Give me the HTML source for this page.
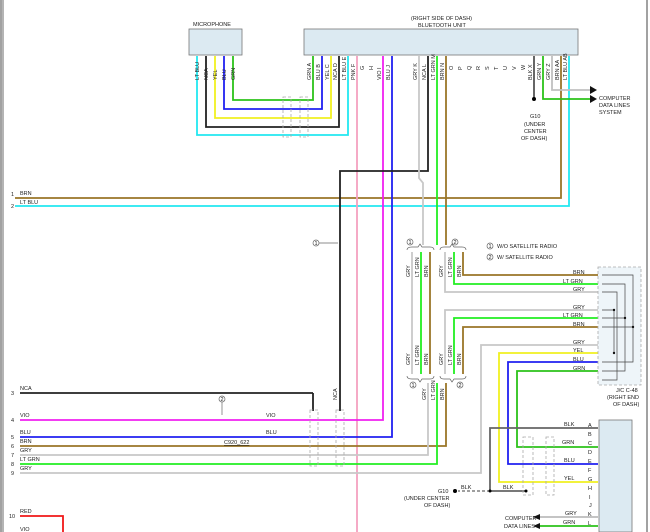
<!DOCTYPE html>
<html><head><meta charset="utf-8"><style>
html,body{margin:0;padding:0;background:#fff;}
svg{display:block;font-family:"Liberation Sans",sans-serif;}
text{font-size:5.5px;fill:#222;}
</style></head><body>
<svg width="650" height="532" viewBox="0 0 650 532" xmlns="http://www.w3.org/2000/svg">
<rect x="0" y="0" width="650" height="532" fill="#fff"/>
<line x1="1" y1="0" x2="1" y2="532" stroke="#444" stroke-width="1"/>
<line x1="3" y1="0" x2="3" y2="532" stroke="#444" stroke-width="0.8"/>
<line x1="647" y1="0" x2="647" y2="532" stroke="#444" stroke-width="1"/>

<!-- boxes -->
<text x="193" y="26">MICROPHONE</text>
<rect x="189" y="29" width="53" height="26" fill="#dceaf2" stroke="#777" stroke-width="0.8"/>
<text x="411" y="20">(RIGHT SIDE OF DASH)</text>
<text x="418" y="27">BLUETOOTH UNIT</text>
<rect x="304" y="29" width="274" height="26" fill="#dceaf2" stroke="#777" stroke-width="0.8"/>

<g fill="none" stroke-width="1.8">
<!-- mic wires -->
<path d="M233 56V100H313V56" stroke="#2cc21a"/>
<path d="M224 56V109H322V56" stroke="#2020f0"/>
<path d="M215 56V118H331V56" stroke="#f0f020"/>
<path d="M206 56V127H339V56" stroke="#222"/>
<path d="M197 56V135H348V56" stroke="#22e8f0"/>
<!-- right side -->
<path d="M15 198H561V56" stroke="#9a7628"/>
<path d="M15 206H569V56" stroke="#22e8f0"/>
<path d="M357 56V532" stroke="#f4a0c0"/>
<path d="M383 56V420H20" stroke="#f020f0"/>
<path d="M392 56V437H20" stroke="#2020f0"/>
<path d="M428 56V171H340V411" stroke="#222"/>
<path d="M313 393H20M313 393V411" stroke="#222"/>
<path d="M419 56V178L423 183V245" stroke="#c8c8c8"/>
<path d="M437 56V245" stroke="#22ee22"/>
<path d="M446 56V245" stroke="#9a7628"/>
<path d="M534 56V98" stroke="#555"/>
<path d="M543 56V99H590" stroke="#2cc21a"/>
<path d="M552 56V90H590" stroke="#c0c0c0"/>
<!-- group1 -->
<path d="M412 252V374" stroke="#c8c8c8"/>
<path d="M421 252V374" stroke="#22ee22"/>
<path d="M430 252V374" stroke="#9a7628"/>
<!-- group2 -->
<path d="M463 252V275H598" stroke="#9a7628"/>
<path d="M454 252V284H598" stroke="#22ee22"/>
<path d="M445 252V292H598" stroke="#c8c8c8"/>
<path d="M445 374V310H598" stroke="#c8c8c8"/>
<path d="M454 374V318H598" stroke="#22ee22"/>
<path d="M463 374V327H598" stroke="#9a7628"/>
<!-- lower -->
<path d="M446 383V446H20" stroke="#9a7628"/>
<path d="M428 383V455H20" stroke="#c8c8c8"/>
<path d="M437 383V464H20" stroke="#22ee22"/>
<path d="M598 345H481V473H20" stroke="#c8c8c8"/>
<path d="M598 353H499V482H598" stroke="#f0f020"/>
<path d="M598 362H508V464H598" stroke="#2020f0"/>
<path d="M598 371H517V447H598" stroke="#2cc21a"/>
<path d="M598 428H490V491H526" stroke="#666"/>
<path d="M598 517H540" stroke="#bbb"/>
<path d="M598 526H540" stroke="#2cc21a"/>
<path d="M20 516H63V532" stroke="#f01818"/>
</g>
<path d="M490 491H458" stroke="#666" stroke-width="1.3" stroke-dasharray="3,2"/>
<circle cx="490" cy="491" r="1.5"/><circle cx="526" cy="491" r="1.5"/><circle cx="455" cy="491" r="2"/>
<circle cx="534" cy="99" r="2"/>
<polygon points="590,86 597,90 590,94" fill="#111"/>
<polygon points="590,95 597,99 590,103" fill="#111"/>
<polygon points="540,514 533,517 540,520" fill="#111"/>
<polygon points="540,523 533,526 540,529" fill="#111"/>

<!-- dashed shields -->
<g fill="none" stroke="#aaa" stroke-width="0.8" stroke-dasharray="3,2">
<rect x="283" y="97" width="8" height="40"/><rect x="300" y="97" width="8" height="40"/>
<rect x="310" y="410" width="8" height="56"/><rect x="336" y="410" width="8" height="56"/>
<rect x="523" y="437" width="10" height="58"/><rect x="546" y="437" width="8" height="58"/>
<rect x="598" y="267" width="43" height="118" fill="#e3eef5" fill-opacity="0.6"/>
</g>
<rect x="599" y="420" width="33" height="112" fill="#dceaf2" stroke="#777" stroke-width="0.8"/>
<!-- J/C internal -->
<g fill="none" stroke="#444" stroke-width="0.7">
<path d="M602 275H633V362H602M602 284H625V371H602M602 292H617V380H602"/>
<path d="M602 310H614V353M602 318H625M602 327H633"/>
</g>
<g fill="#111"><circle cx="614" cy="310" r="1.2"/><circle cx="625" cy="318" r="1.2"/><circle cx="633" cy="327" r="1.2"/><circle cx="614" cy="353" r="1.2"/></g>

<!-- braces -->
<g fill="none" stroke="#666" stroke-width="0.7">
<path d="M407 250Q407 247 412 247H418L420 244L422 247H430Q434 247 434 250"/>
<path d="M440 250Q440 247 444 247H450L452 244L454 247H462Q466 247 466 250"/>
<path d="M407 376Q407 379 412 379H418L420 382L422 379H430Q434 379 434 376"/>
<path d="M440 376Q440 379 444 379H450L452 382L454 379H462Q466 379 466 376"/>
<circle cx="410" cy="242" r="3"/><circle cx="455" cy="242" r="3"/>
<circle cx="413" cy="385" r="3"/><circle cx="460" cy="385" r="3"/>
<circle cx="490" cy="246" r="3"/><circle cx="490" cy="257" r="3"/>
<circle cx="316" cy="243" r="3"/><path d="M319 243H338"/>
<circle cx="222" cy="399" r="3"/><path d="M222 402V415"/>
</g>
<g style="font-size:4px">
<text x="408.5" y="244">1</text><text x="453.5" y="244">2</text><text x="411.5" y="387">1</text><text x="458.5" y="387">2</text>
<text x="488.5" y="248">1</text><text x="488.5" y="259">2</text><text x="314.5" y="245">1</text><text x="220.5" y="401">2</text>
</g>
<text x="497" y="248">W/O SATELLITE RADIO</text>
<text x="497" y="259">W/ SATELLITE RADIO</text>

<!-- left labels -->
<text x="11" y="196">1</text><text x="20" y="195">BRN</text>
<text x="11" y="208">2</text><text x="20" y="204">LT BLU</text>
<text x="11" y="395">3</text><text x="20" y="390">NCA</text>
<text x="11" y="422">4</text><text x="20" y="417">VIO</text><text x="266" y="417">VIO</text>
<text x="11" y="439">5</text><text x="20" y="434">BLU</text><text x="266" y="434">BLU</text>
<text x="11" y="448">6</text><text x="20" y="443">BRN</text>
<text x="11" y="457">7</text><text x="20" y="452">GRY</text>
<text x="11" y="466">8</text><text x="20" y="461">LT GRN</text>
<text x="11" y="475">9</text><text x="20" y="470">GRY</text>
<text x="9" y="518">10</text><text x="20" y="513">RED</text>
<text x="20" y="531">VIO</text>
<text x="224" y="444" text-decoration="underline">C920_622</text>

<!-- right labels -->
<text x="573" y="274">BRN</text><text x="563" y="283">LT GRN</text><text x="573" y="291">GRY</text>
<text x="573" y="309">GRY</text><text x="563" y="317">LT GRN</text><text x="573" y="326">BRN</text>
<text x="573" y="344">GRY</text><text x="573" y="352">YEL</text><text x="573" y="361">BLU</text><text x="573" y="370">GRN</text>
<text x="616" y="392">J/C C-48</text><text x="607" y="399">(RIGHT END</text><text x="613" y="406">OF DASH)</text>
<g style="font-size:5px">
<text x="588" y="427">A</text><text x="588" y="436">B</text><text x="588" y="445">C</text><text x="588" y="454">D</text><text x="588" y="463">E</text><text x="588" y="472">F</text><text x="588" y="481">G</text><text x="588" y="490">H</text><text x="589" y="499">I</text><text x="589" y="507">J</text><text x="588" y="516">K</text><text x="588" y="525">L</text>
</g>
<text x="564" y="426">BLK</text><text x="562" y="444">GRN</text><text x="564" y="462">BLU</text><text x="564" y="480">YEL</text>
<text x="565" y="515">GRY</text><text x="563" y="524">GRN</text>
<text x="461" y="489">BLK</text><text x="503" y="489">BLK</text>
<text x="438" y="493">G10</text><text x="404" y="500">(UNDER CENTER</text><text x="424" y="507">OF DASH)</text>
<text x="505" y="520">COMPUTER</text><text x="504" y="528">DATA LINES</text>
<text x="599" y="100">COMPUTER</text><text x="599" y="107">DATA LINES</text><text x="599" y="114">SYSTEM</text>
<text x="530" y="118">G10</text><text x="524" y="126">(UNDER</text><text x="524" y="133">CENTER</text><text x="521" y="140">OF DASH)</text>

<!-- vertical pin labels -->
<g style="font-size:5px">
<text transform="translate(199,80) rotate(-90)">LT BLU</text>
<text transform="translate(208,80) rotate(-90)">NCA</text>
<text transform="translate(217,80) rotate(-90)">YEL</text>
<text transform="translate(226,80) rotate(-90)">BLU</text>
<text transform="translate(235,80) rotate(-90)">GRN</text>
<text transform="translate(311,80) rotate(-90)">GRN A</text>
<text transform="translate(320,80) rotate(-90)">BLU B</text>
<text transform="translate(329,80) rotate(-90)">YEL C</text>
<text transform="translate(337,80) rotate(-90)">NCA D</text>
<text transform="translate(346,80) rotate(-90)">LT BLU E</text>
<text transform="translate(355,80) rotate(-90)">PNK F</text>
<text transform="translate(364,70) rotate(-90)">G</text><text transform="translate(373,70) rotate(-90)">H</text>
<text transform="translate(381,80) rotate(-90)">VIO I</text>
<text transform="translate(390,80) rotate(-90)">BLU J</text>
<text transform="translate(417,80) rotate(-90)">GRY K</text>
<text transform="translate(426,80) rotate(-90)">NCA L</text>
<text transform="translate(435,80) rotate(-90)">LT GRN M</text>
<text transform="translate(444,80) rotate(-90)">BRN N</text>
<text transform="translate(453,70) rotate(-90)">O</text><text transform="translate(462,70) rotate(-90)">P</text>
<text transform="translate(471,70) rotate(-90)">Q</text><text transform="translate(480,70) rotate(-90)">R</text>
<text transform="translate(489,70) rotate(-90)">S</text><text transform="translate(498,70) rotate(-90)">T</text>
<text transform="translate(507,70) rotate(-90)">U</text><text transform="translate(516,70) rotate(-90)">V</text>
<text transform="translate(525,70) rotate(-90)">W</text>
<text transform="translate(532,80) rotate(-90)">BLK X</text>
<text transform="translate(541,80) rotate(-90)">GRN Y</text>
<text transform="translate(550,80) rotate(-90)">GRY Z</text>
<text transform="translate(559,80) rotate(-90)">BRN AA</text>
<text transform="translate(567,80) rotate(-90)">LT BLU AB</text>
<text transform="translate(337,400) rotate(-90)">NCA</text>
<text transform="translate(410,277) rotate(-90)">GRY</text><text transform="translate(419,277) rotate(-90)">LT GRN</text><text transform="translate(428,277) rotate(-90)">BRN</text>
<text transform="translate(443,277) rotate(-90)">GRY</text><text transform="translate(452,277) rotate(-90)">LT GRN</text><text transform="translate(461,277) rotate(-90)">BRN</text>
<text transform="translate(410,365) rotate(-90)">GRY</text><text transform="translate(419,365) rotate(-90)">LT GRN</text><text transform="translate(428,365) rotate(-90)">BRN</text>
<text transform="translate(443,365) rotate(-90)">GRY</text><text transform="translate(452,365) rotate(-90)">LT GRN</text><text transform="translate(461,365) rotate(-90)">BRN</text>
<text transform="translate(426,400) rotate(-90)">GRY</text><text transform="translate(435,400) rotate(-90)">LT GRN</text><text transform="translate(444,400) rotate(-90)">BRN</text>
</g>
</svg>
</body></html>
